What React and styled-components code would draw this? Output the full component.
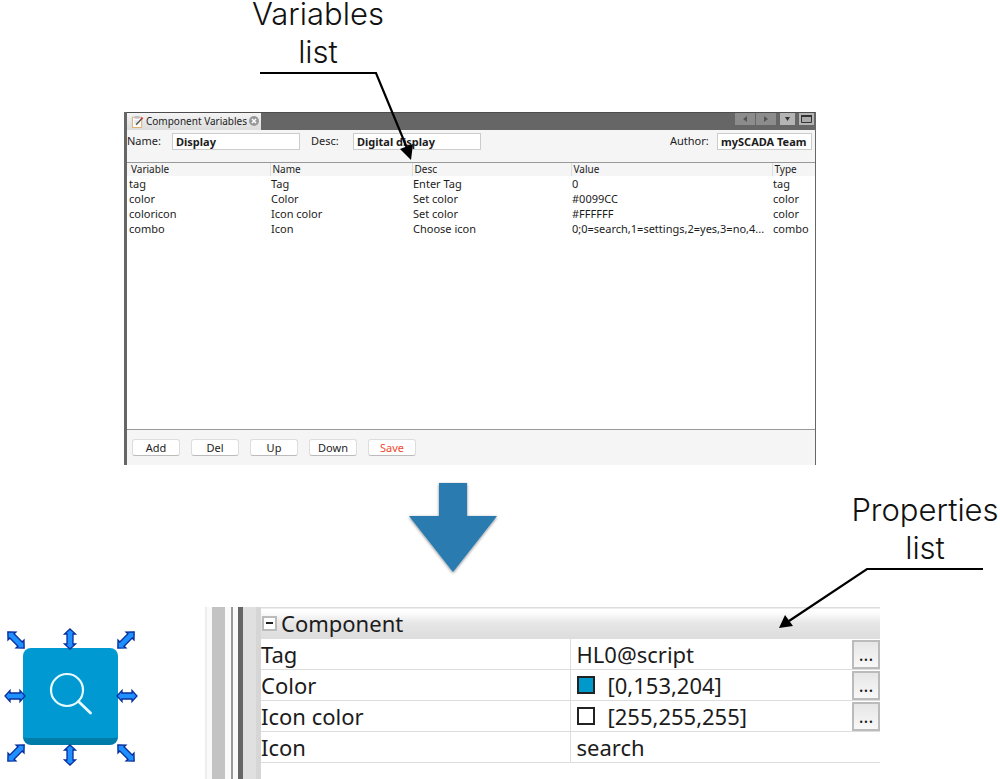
import React from "react";
import styled, { createGlobalStyle, css } from "styled-components";

const GlobalStyle = createGlobalStyle`
	* {
		box-sizing: border-box;
	}

	body {
		margin: 0;
		background: white;
		color: #1c1c1c;
		font-family: "Noto Sans", "Open Sans", sans-serif;
		font-size: 11px;
	}

	button,
	input {
		font: inherit;
		color: inherit;
		margin: 0;
	}
`;

const Page = styled.main`
	display: flex;
	flex-direction: column;
	min-height: 100vh;
	overflow: hidden;
`;

/* callouts */

const CalloutBox = styled.div`
	display: flex;
	flex-direction: column;
	align-items: center;
	width: 150px;
`;

const CalloutTitle = styled.h2`
	margin: 0;
	color: #111;
	font-family: Inter, "Liberation Sans", sans-serif;
	font-size: 31px;
	font-weight: 300;
	line-height: 38px;
	text-align: center;
`;

const Leader = styled.svg`
	position: relative;
	z-index: 2;
	width: 118px;
	height: 6px;
	overflow: visible;
	pointer-events: none;
`;

const TopCallout = styled.div`
	height: 112px;
	margin-top: -5px;
	margin-bottom: 5px;
	padding-left: 243px;
`;

/* variables window */

const Window = styled.section`
	margin: 0 184px 0 124px;
	border: solid #666;
	border-width: 0 1px 0 3px;
	background: #f5f5f5;
`;

const TabBar = styled.header`
	display: flex;
	align-items: flex-start;
	justify-content: space-between;
	height: 18px;
	background: #666;
	border-top: 1px solid #4d4d4d;
`;

const Tab = styled.div`
	display: flex;
	align-items: center;
	gap: 2px;
	width: 134px;
	height: 17px;
	padding: 0 4px 1px;
	background: linear-gradient(#f4f4f4, #dcdcdc);
	font-size: 10px;
	white-space: nowrap;

	svg {
		flex-shrink: 0;
	}
`;

const TabClose = styled.button`
	display: flex;
	margin-left: auto;
	padding: 0;
	border: 0;
	background: none;
`;

const WindowControls = styled.div`
	display: flex;
	gap: 4px;
	padding-right: 1px;
`;

const ControlGroup = styled.div`
	display: flex;
	gap: 1px;
`;

const ControlButton = styled.button`
	display: flex;
	align-items: center;
	justify-content: center;
	width: ${(props) => (props.$wide ? 20 : 15)}px;
	height: 12px;
	padding: 0;
	border: 0;
	background: ${(props) => (props.$wide ? "#8c8c8c" : "#b4b4b4")};
`;

const Form = styled.form`
	display: flex;
	align-items: flex-start;
	height: 32px;
	padding: 3px 3px 0 0;
`;

const Label = styled.label`
	width: ${(props) => props.$width}px;
	padding-left: ${(props) => props.$indent || 0}px;
	line-height: 15px;
`;

const Field = styled.input`
	width: ${(props) => props.$width}px;
	height: 17px;
	padding: 0 3px;
	border: 1px solid #ccc;
	border-radius: 0;
	background: white;
	font-weight: 700;
`;

const AuthorGroup = styled.div`
	display: flex;
	margin-left: auto;
`;

const TableArea = styled.div`
	min-height: 268px;
	border: solid #999;
	border-width: 1px 0;
	background: white;
`;

const VariableTable = styled.table`
	width: 100%;
	table-layout: fixed;
	border-collapse: collapse;
	text-align: left;

	th {
		height: 13px;
		padding: 0 4px;
		background: #f5f5f5;
		font-size: 10px;
		font-weight: 400;
		line-height: 13px;
	}

	th + th {
		padding-left: 2px;
		border-left: 1px solid #ddd;
	}

	td {
		height: 15px;
		padding: 0 2px;
		line-height: 15px;
		white-space: nowrap;
	}

	td + td {
		padding: 0 1px;
	}
`;

const Col = styled.col`
	width: ${(props) => (props.$width ? `${props.$width}px` : "auto")};
`;

const ButtonBar = styled.footer`
	display: flex;
	gap: 11px;
	height: 35px;
	padding: 9px 5px;
`;

const BarButton = styled.button`
	width: 48px;
	height: 17px;
	padding: 0;
	border: 1px solid #ddd;
	border-bottom-color: #bbb;
	border-radius: 3px;
	background: white;
	line-height: 14px;
	${(props) =>
		props.$accent &&
		css`
			color: #f04a30;
		`}
`;

/* arrow and the second callout */

const Middle = styled.section`
	display: flex;
	align-items: flex-start;
	justify-content: space-between;
	height: 142px;
	padding: 17px 0 0 405px;
`;

const BottomCallout = styled.div`
	padding-top: 9px;
`;

/* selected component and its properties */

const Bottom = styled.section`
	display: flex;
	flex: 1;
	min-height: 172px;
`;

const Selection = styled.div`
	position: relative;
	width: 134px;
	height: 138px;
	margin: 21px 67px 0 4px;
	padding: 20px 19px;
`;

const SearchTile = styled.button`
	display: block;
	width: 95px;
	height: 97px;
	padding: 0;
	border: 0;
	border-bottom: 7px solid #007cab;
	border-radius: 8px;
	background: #0099d2;
`;

const Handles = styled.svg`
	position: absolute;
	top: 0;
	left: 0;
	pointer-events: none;
`;

const Properties = styled.div`
	display: flex;
	flex: 1;
	margin-right: 120px;
`;

const Gutter = styled.div`
	width: 56px;
	background: linear-gradient(
		to right,
		#eee 0 2px,
		#fafafa 2px 7px,
		#c3c3c3 7px 20px,
		#fafafa 20px 26px,
		#999 26px 28px,
		#fafafa 28px 33px,
		#666 33px 38px,
		#e0e0e0 38px 51px,
		#d6d6d6 51px 56px
	);
`;

const PropertyTable = styled.table`
	flex: 1;
	align-self: flex-start;
	table-layout: fixed;
	border-collapse: collapse;
	color: #1c1c1c;
	font-size: 22px;
	text-align: left;

	th,
	td {
		height: 31px;
		padding: 0;
		border-bottom: 1px solid #ddd;
		font-weight: 400;
		line-height: 30px;
	}

	td {
		border-left: 1px solid #ddd;
	}
`;

const GroupHead = styled.th`
	&& {
		border-top: 1px solid #ddd;
		background: linear-gradient(#fff 10%, #e6e6e6 50%, #dcdcdc);
	}
`;

const GroupTitle = styled.div`
	display: flex;
	align-items: center;
	gap: 4px;
	padding-left: 1px;
`;

const Toggle = styled.button`
	display: flex;
	align-items: center;
	justify-content: center;
	width: 15px;
	height: 15px;
	padding: 0;
	border: 2px solid #bbb;
	background: white;
`;

const Value = styled.div`
	display: flex;
	align-items: center;
	height: 30px;
	padding-left: 6px;
`;

const Swatch = styled.span`
	width: 18px;
	height: 18px;
	margin-right: 13px;
	border: 2px solid #222;
	background: ${(props) => props.$color};
`;

const MoreButton = styled.button`
	width: 28px;
	height: 29px;
	margin-left: auto;
	padding: 0;
	border: 2px solid #bbb;
	background: linear-gradient(#e6e6e6, #f8f8f8);
	font-size: 18px;
	line-height: 24px;
`;

const variables = [
	["tag", "Tag", "Enter Tag", "0", "tag"],
	["color", "Color", "Set color", "#0099CC", "color"],
	["coloricon", "Icon color", "Set color", "#FFFFFF", "color"],
	["combo", "Icon", "Choose icon", "0;0=search,1=settings,2=yes,3=no,4...", "combo"],
];

const properties = [
	{ name: "Tag", value: "HL0@script", more: true },
	{ name: "Color", value: "[0,153,204]", color: "#0099cc", more: true },
	{ name: "Icon color", value: "[255,255,255]", color: "#fff", more: true },
	{ name: "Icon", value: "search" },
];

// x, y, rotation of each resize handle
const handles = [
	[12, 12, 45],
	[66, 11, 90],
	[122, 12, -45],
	[11, 68, 0],
	[123, 68, 0],
	[12, 125, -45],
	[66, 127, 90],
	[122, 125, 45],
];

const Callout = ({ word, children }) => (
	<CalloutBox>
		<CalloutTitle>
			{word}
			<br />
			list
		</CalloutTitle>
		<Leader viewBox="0 0 118 6" fill="none" stroke="#000" strokeWidth="2.2">
			{children}
		</Leader>
	</CalloutBox>
);

const NoteIcon = () => (
	<svg width="13" height="13" viewBox="0 0 14 14" fill="none">
		<path d="M1.5 2.5h10v11h-10z" fill="#fff" stroke="#e0a563" />
		<path d="M4 1h5v3H4z" fill="#bcc3cb" />
		<path d="M3.5 6.5h4M3.5 8.5h3" stroke="#ccd" />
		<path d="M5.5 10.5l6-6.5" stroke="#555" strokeWidth="1.6" />
		<path d="M11 4.5l1.5-1.6" stroke="#d33" strokeWidth="2" />
	</svg>
);

const VariablesWindow = () => (
	<Window>
		<TabBar>
			<Tab>
				<NoteIcon />
				Component Variables
				<TabClose aria-label="Close">
					<svg width="10" height="10" viewBox="0 0 10 10">
						<circle cx="5" cy="5" r="5" fill="#999" />
						<path d="M3 3l4 4M7 3l-4 4" stroke="#fff" strokeWidth="1.5" />
					</svg>
				</TabClose>
			</Tab>
			<WindowControls>
				<ControlGroup>
					<ControlButton $wide aria-label="Previous">
						<svg width="4" height="6" viewBox="0 0 4 6">
							<path d="M4 0v6L0 3z" fill="#555" />
						</svg>
					</ControlButton>
					<ControlButton $wide aria-label="Next">
						<svg width="4" height="6" viewBox="0 0 4 6">
							<path d="M0 0v6l4-3z" fill="#555" />
						</svg>
					</ControlButton>
				</ControlGroup>
				<ControlButton aria-label="Tabs">
					<svg width="5" height="4" viewBox="0 0 5 4">
						<path d="M0 0h5L2.5 4z" fill="#333" />
					</svg>
				</ControlButton>
				<ControlButton aria-label="Maximize">
					<svg width="11" height="8" viewBox="0 0 11 8">
						<path d="M.5 1h10v6.5H.5z" fill="#aaa" stroke="#333" />
						<path d="M0 1h11" stroke="#333" strokeWidth="2" />
					</svg>
				</ControlButton>
			</WindowControls>
		</TabBar>
		<Form>
			<Label htmlFor="name" $width={45}>Name:</Label>
			<Field id="name" $width={128} defaultValue="Display" />
			<Label htmlFor="desc" $width={53} $indent={11}>Desc:</Label>
			<Field id="desc" $width={128} defaultValue="Digital display" />
			<AuthorGroup>
				<Label htmlFor="author" $width={47}>Author:</Label>
				<Field id="author" $width={95} defaultValue="mySCADA Team" />
			</AuthorGroup>
		</Form>
		<TableArea>
			<VariableTable>
				<colgroup>
					<Col $width={143} />
					<Col $width={142} />
					<Col $width={159} />
					<Col />
					<Col $width={43} />
				</colgroup>
				<thead>
					<tr>
						<th>Variable</th>
						<th>Name</th>
						<th>Desc</th>
						<th>Value</th>
						<th>Type</th>
					</tr>
				</thead>
				<tbody>
					{variables.map((row) => (
						<tr key={row[0]}>
							{row.map((cell, i) => (
								<td key={i}>{cell}</td>
							))}
						</tr>
					))}
				</tbody>
			</VariableTable>
		</TableArea>
		<ButtonBar>
			<BarButton>Add</BarButton>
			<BarButton>Del</BarButton>
			<BarButton>Up</BarButton>
			<BarButton>Down</BarButton>
			<BarButton $accent>Save</BarButton>
		</ButtonBar>
	</Window>
);

const DownArrow = () => (
	<svg width="96" height="98" viewBox="0 0 96 98">
		<defs>
			<filter id="arrow-shadow" x="-10%" y="-10%" width="120%" height="120%">
				<feDropShadow dx="0" dy="1" stdDeviation="1.5" floodOpacity="0.5" />
			</filter>
		</defs>
		<path
			d="M34 1h28v33h30L48 90 4 34h30z"
			fill="#2b7bb0"
			filter="url(#arrow-shadow)"
		/>
	</svg>
);

const SelectedComponent = () => (
	<Selection>
		<SearchTile aria-label="Search">
			<svg width="95" height="90" viewBox="0 0 95 90" fill="none" stroke="#e8fbff" strokeWidth="2.2">
				<circle cx="44" cy="42" r="16" />
				<path d="M55.5 53.5l12 11.5" strokeWidth="2.8" strokeLinecap="round" />
			</svg>
		</SearchTile>
		<Handles width="134" height="138" viewBox="0 0 134 138">
			{handles.map(([x, y, angle]) => (
				<path
					key={`${x}-${y}`}
					d="M-10 0L-5-5.5V-3H5V-5.5L10 0 5 5.5V3H-5V5.5z"
					transform={`translate(${x} ${y}) rotate(${angle})${angle % 90 ? " scale(1.15 1)" : ""}`}
					fill="#1e90ff"
					stroke="#0a2f9c"
					strokeWidth="1.3"
				/>
			))}
		</Handles>
	</Selection>
);

const PropertiesPanel = () => (
	<Properties>
		<Gutter />
		<PropertyTable>
			<colgroup>
				<Col $width={309} />
				<Col />
			</colgroup>
			<thead>
				<tr>
					<GroupHead colSpan={2}>
						<GroupTitle>
							<Toggle aria-label="Collapse">
								<svg width="7" height="2" viewBox="0 0 7 2">
									<path d="M0 1h7" stroke="#222" strokeWidth="2" />
								</svg>
							</Toggle>
							Component
						</GroupTitle>
					</GroupHead>
				</tr>
			</thead>
			<tbody>
				{properties.map(({ name, value, color, more }) => (
					<tr key={name}>
						<th scope="row">{name}</th>
						<td>
							<Value>
								{color ? <Swatch $color={color} /> : null}
								{value}
								{more ? <MoreButton aria-label={`Edit ${name}`}>...</MoreButton> : null}
							</Value>
						</td>
					</tr>
				))}
			</tbody>
		</PropertyTable>
	</Properties>
);

const App = () => {
	return (
		<>
			<GlobalStyle />
			<Page>
				<TopCallout>
					<Callout word="Variables">
						<path d="M1 2h116l31 75" />
						<path d="M152 89l-11-11 13-5z" fill="#000" stroke="none" />
					</Callout>
				</TopCallout>
				<VariablesWindow />
				<Middle>
					<DownArrow />
					<BottomCallout>
						<Callout word="Properties">
							<path d="M117 2H1L-77 54" />
							<path d="M-87 61l6-13 8 11z" fill="#000" stroke="none" />
						</Callout>
					</BottomCallout>
				</Middle>
				<Bottom>
					<SelectedComponent />
					<PropertiesPanel />
				</Bottom>
			</Page>
		</>
	);
};

export default App;
